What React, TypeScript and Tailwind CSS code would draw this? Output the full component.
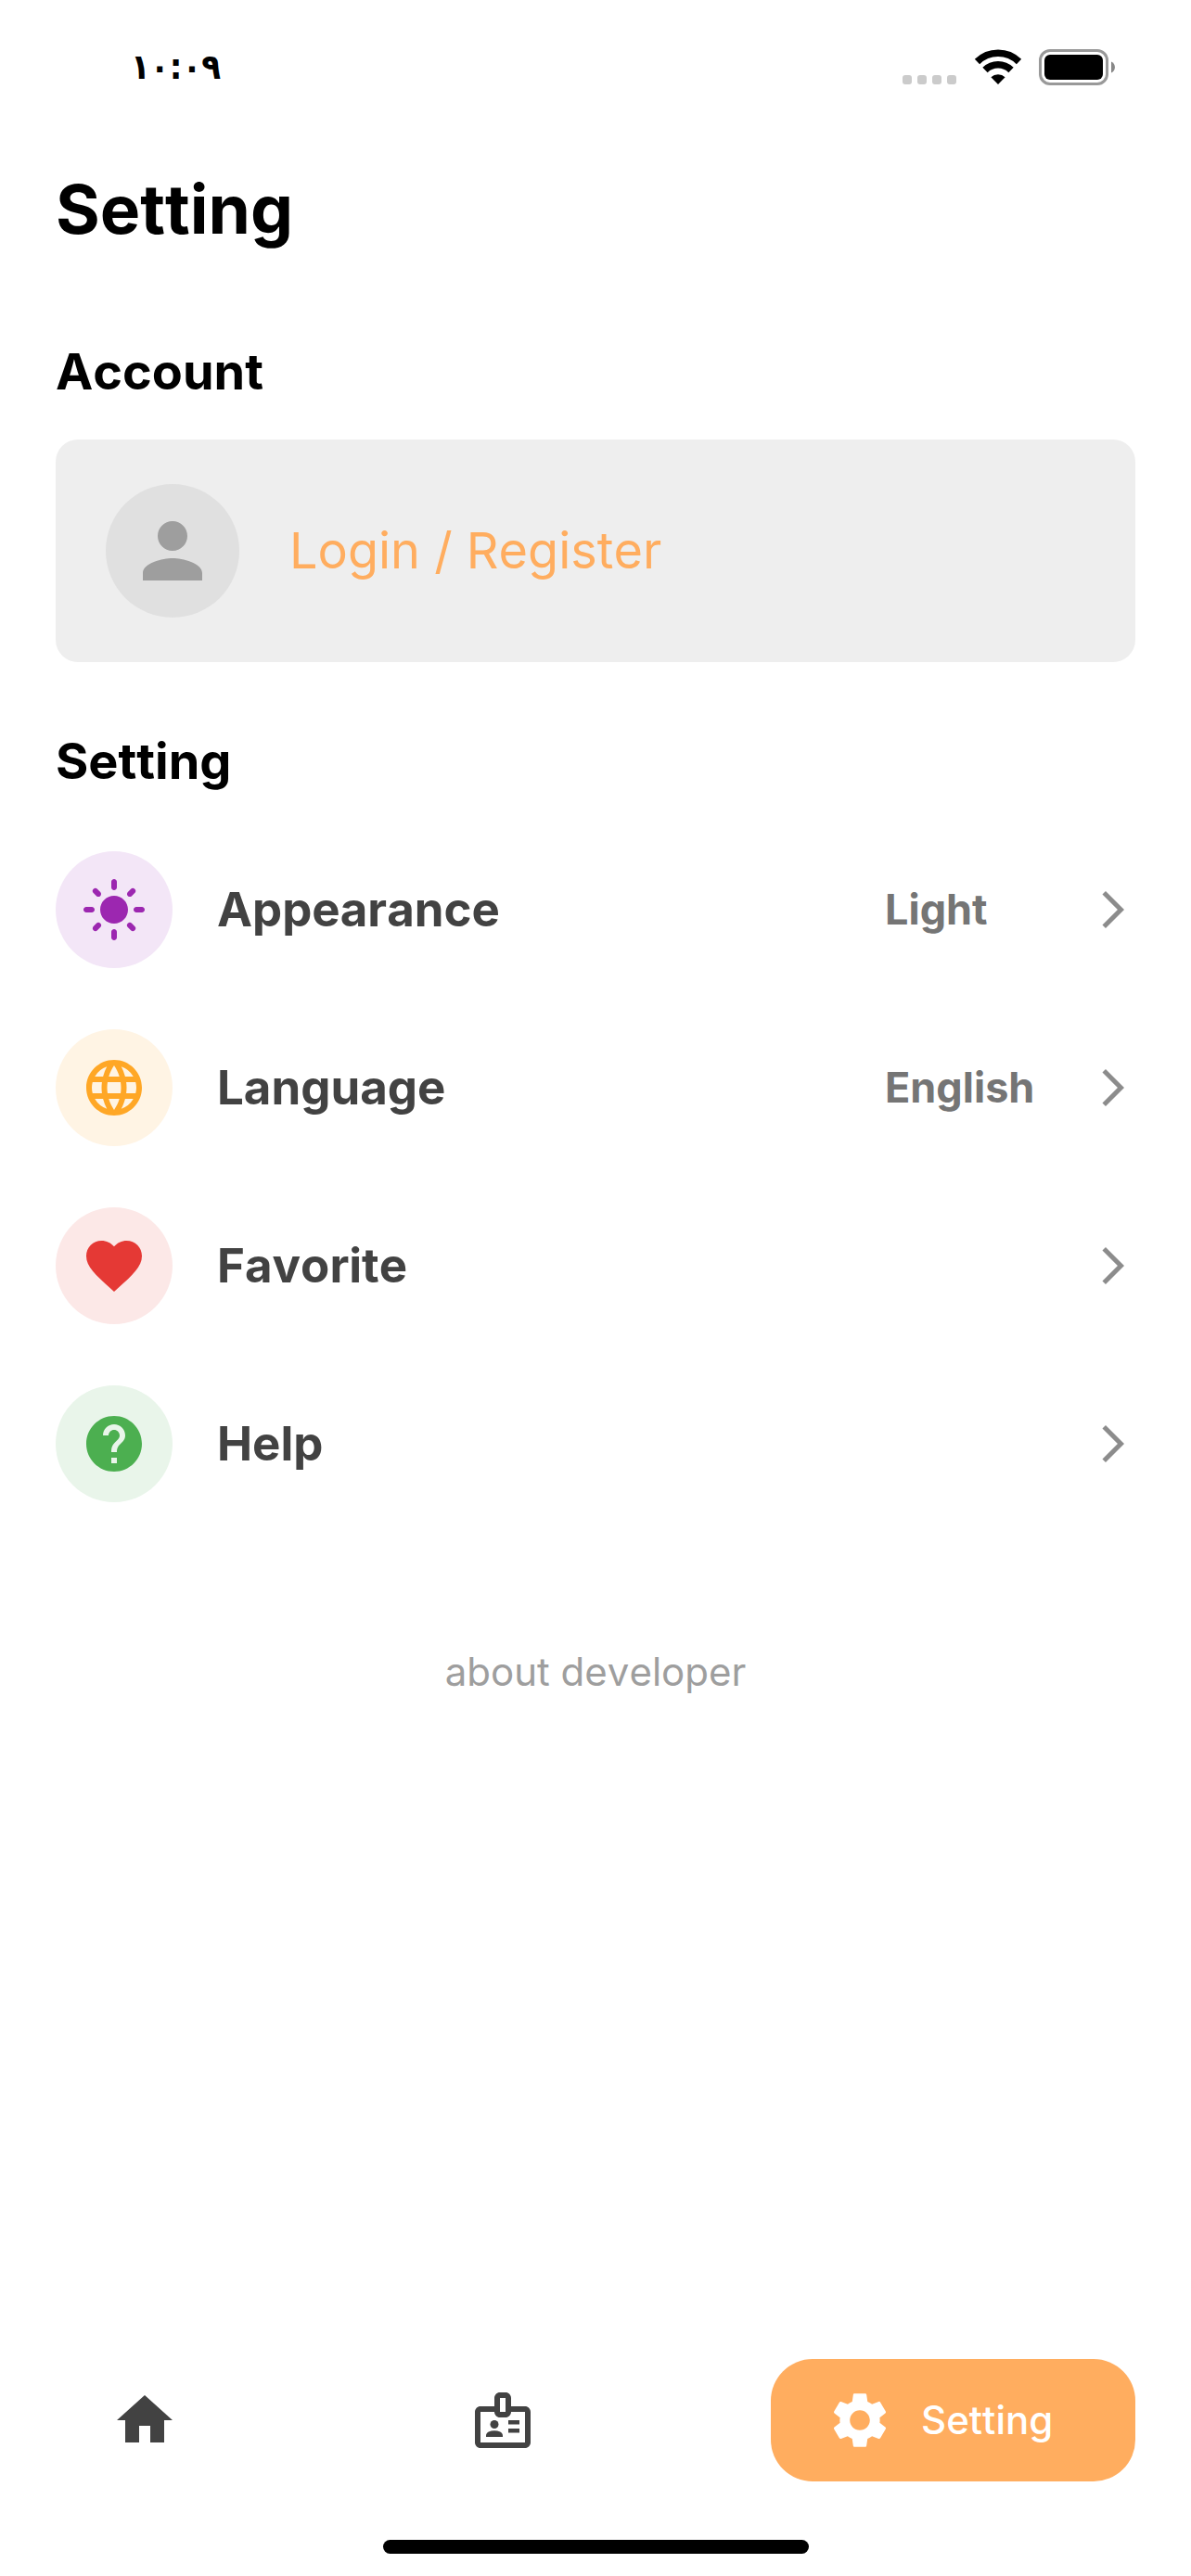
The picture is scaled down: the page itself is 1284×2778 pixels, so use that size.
import type { IconType } from "react-icons";
import {
  MdArrowForwardIos,
  MdFavorite,
  MdHelp,
  MdHome,
  MdLanguage,
  MdLightMode,
  MdOutlineBadge,
  MdPerson,
  MdSettings,
} from "react-icons/md";

type Row = {
  label: string;
  value?: string;
  icon: IconType;
  tint: string;
};

const rows: Row[] = [
  { label: "Appearance", value: "Light", icon: MdLightMode, tint: "bg-[#f3e6f7] text-[#9c27b0]" },
  { label: "Language", value: "English", icon: MdLanguage, tint: "bg-[#fff4e4] text-[#ffa726]" },
  { label: "Favorite", icon: MdFavorite, tint: "bg-[#fce8e7] text-[#e53935]" },
  { label: "Help", icon: MdHelp, tint: "bg-[#e9f5ea] text-[#4caf50]" },
];

function WifiIcon() {
  return (
    <svg className="h-[38px] w-[52px]" viewBox="0 0 52 38" fill="none" aria-hidden="true">
      <path d="M3.5 13.5a32 32 0 0 1 45 0" stroke="#000" strokeWidth="7.6" />
      <path d="M12 22.5a20 20 0 0 1 28 0" stroke="#000" strokeWidth="7.6" />
      <path d="M26 38l-7.6-7.8a11 11 0 0 1 15.2 0z" fill="#000" />
    </svg>
  );
}

function BatteryIcon() {
  return (
    <svg className="h-[39px] w-[83px]" viewBox="0 0 83 39" fill="none" aria-hidden="true">
      <rect x="1.5" y="1.5" width="72" height="36" rx="10.5" stroke="#999" strokeWidth="3" />
      <rect x="6" y="6" width="63" height="27" rx="6" fill="#000" />
      <path d="M78 13.5c5.3 2 5.3 10 0 12z" fill="#888" />
    </svg>
  );
}

function StatusBar() {
  return (
    <header className="flex h-[144px] items-center justify-between pr-[81px] pl-[141px]">
      <time className="font-['DejaVu_Sans_Condensed','DejaVu_Sans',sans-serif] text-[38px] leading-[48px] font-bold">
        ١٠:٠٩
      </time>
      <div className="flex items-center">
        <div className="mr-[19px] flex gap-[6px] pt-[28px]">
          {[0, 1, 2, 3].map((n) => (
            <span key={n} className="size-[10px] rounded-[3px] bg-[#cbcbcb]" />
          ))}
        </div>
        <WifiIcon />
        <span className="w-[18px]" />
        <BatteryIcon />
      </div>
    </header>
  );
}

function SettingRow({ label, value, icon: Icon, tint }: Row) {
  return (
    <li>
      <button type="button" className="flex w-full items-center text-left font-bold">
        <span className={`flex size-[126px] items-center justify-center rounded-full ${tint}`}>
          <Icon className="size-[72px]" />
        </span>
        <span className="ml-12 flex-1 text-[51px] leading-[60px] text-[#424242]">{label}</span>
        <span className="w-[222px] text-[45px] leading-[60px] text-[#757575]">{value}</span>
        <MdArrowForwardIos className="size-12 text-[#8c8c8c]" />
      </button>
    </li>
  );
}

export default function App() {
  return (
    <div className="flex min-h-screen flex-col bg-white font-['Inter',sans-serif] text-black [font-kerning:none]">
      <StatusBar />
      <main className="flex flex-col px-[60px] pt-[42px]">
        <h1 className="text-[73px] leading-[80px] font-bold">Setting</h1>

        <h2 className="mt-[105px] text-[54px] leading-[60px] font-bold">Account</h2>
        <button
          type="button"
          className="mt-[43px] flex items-center gap-[54px] rounded-[24px] bg-[#eeeeee] px-[54px] py-12 text-left"
        >
          <span className="flex size-[144px] items-center justify-center rounded-full bg-[#e0e0e0] text-[#9e9e9e]">
            <MdPerson className="size-[96px]" />
          </span>
          <span className="text-[54px] leading-[60px] text-[#ffad5f]">Login / Register</span>
        </button>

        <h2 className="mt-[77px] text-[54px] leading-[60px] font-bold">Setting</h2>
        <ul className="mt-[67px] flex flex-col gap-[66px]">
          {rows.map((row) => (
            <SettingRow key={row.label} {...row} />
          ))}
        </ul>

        <a href="#about" className="mt-[153px] self-center text-[42px] leading-[60px] text-[#9e9e9e]">
          about developer
        </a>
      </main>

      <footer className="mt-auto">
        <nav className="flex items-center justify-between px-[60px] text-[#424242]">
          <button type="button" aria-label="Home" className="px-[60px] py-[30px]">
            <MdHome className="size-[72px]" />
          </button>
          <button type="button" aria-label="Profile" className="px-[60px] py-[30px]">
            <MdOutlineBadge className="size-[72px]" />
          </button>
          <button
            type="button"
            aria-current="page"
            className="flex w-[393px] items-center gap-[30px] rounded-[45px] bg-[#ffad5f] py-[30px] pl-[60px] text-white"
          >
            <MdSettings className="size-[72px]" />
            <span className="text-[42px] leading-[60px] font-medium">Setting</span>
          </button>
        </nav>
        <div className="mx-auto mt-[63px] mb-6 h-[15px] w-[459px] rounded-full bg-black" />
      </footer>
    </div>
  );
}
